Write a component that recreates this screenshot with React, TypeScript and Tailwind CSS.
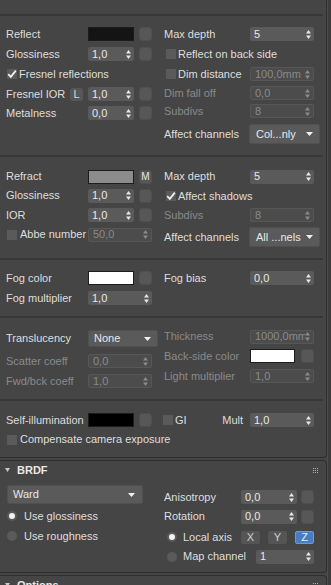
import React from "react";

// small building blocks of the V-Ray material panel

function Arrows({ disabled }: { disabled?: boolean }) {
  const c = disabled ? "#8a8a8a" : "#e8e8e8";
  return (
    <svg width="5" height="9" viewBox="0 0 5 9" className="shrink-0">
      <path d="M2.5 0 L5 3.5 L0 3.5 Z" fill={c} />
      <path d="M0 5.5 L5 5.5 L2.5 9 Z" fill={c} />
    </svg>
  );
}

function Spinner({ value, w, disabled }: { value: string; w: string; disabled?: boolean }) {
  return (
    <div
      className={`${w} h-[14px] shrink-0 rounded-[2px] flex items-center pl-[4px] pr-[3px] ${
        disabled ? "bg-[#4c4c4c] border border-[#575757] text-[#8a8a8a]" : "bg-[#5a5a5a] text-[#e8e8e8]"
      }`}
    >
      <span className="flex-1 overflow-hidden whitespace-nowrap">{value}</span>
      <Arrows disabled={disabled} />
    </div>
  );
}

function Drop({ value, cls }: { value: string; cls: string }) {
  return (
    <div className={`${cls} shrink-0 flex items-center rounded-[2px] bg-[#5a5a5a] border border-[#505050] text-[#e8e8e8]`}>
      <span className="flex-1 whitespace-nowrap">{value}</span>
      <svg width="7" height="4" viewBox="0 0 7 4" className="shrink-0">
        <path d="M0 0 L7 0 L3.5 4 Z" fill="#f0f0f0" />
      </svg>
    </div>
  );
}

function Swatch({ fill, w = "w-[46px]" }: { fill: string; w?: string }) {
  return <div className={`${w} h-[14px] shrink-0 border border-[#1c1c1c] ${fill}`} />;
}

function MapBtn({ label, ml = "ml-[5px]" }: { label?: string; ml?: string }) {
  return (
    <div className={`${ml} w-[13px] h-[14px] shrink-0 rounded-[3px] bg-[#575757] border border-[#4f4f4f] flex items-center justify-center text-[#e8e8e8] text-[10px]`}>
      {label}
    </div>
  );
}

function Check({ on, ml = "ml-[1px]" }: { on?: boolean; ml?: string }) {
  return (
    <div className={`${ml} w-[10px] h-[10px] shrink-0 bg-[#5a5a5a] relative`}>
      {on && (
        <svg width="10" height="10" viewBox="0 0 10 10" className="absolute left-0 top-0">
          <path d="M1.2 5.2 L3.8 7.8 L8.8 1.6" stroke="#f2f2f2" strokeWidth="1.8" fill="none" />
        </svg>
      )}
    </div>
  );
}

function Radio({ on, ml = "" }: { on?: boolean; ml?: string }) {
  return (
    <div className={`${ml} w-[10px] h-[10px] shrink-0 rounded-full bg-[#5a5a5a] flex items-center justify-center`}>
      {on && <div className="w-[6px] h-[6px] rounded-full bg-[#f2f2f2]" />}
    </div>
  );
}

function Grip() {
  return (
    <div className="grid grid-cols-3 gap-[1px] w-[5px]">
      {Array.from({ length: 9 }).map((_, i) => (
        <div key={i} className="w-[1px] h-[1px] bg-[#b0b0b0]" />
      ))}
    </div>
  );
}

function Sep() {
  return <div className="h-[2px] mr-[3px] bg-[#383838]" />;
}

const dim = "text-[#8a8a8a]";

export default function App() {
  return (
    <div className="w-[331px] h-[585px] overflow-hidden bg-[#454545] flex font-['Liberation_Sans',Arial,sans-serif] text-[11px] text-[#dedede] leading-none">
      <div className="w-[327px] shrink-0 flex flex-col">
        {/* main rollout */}
        <div className="border-r border-b border-[#2f2f2f] rounded-br-[4px]">
          <div className="h-[14px]" />
          <Sep />

          {/* reflection */}
          <div className="h-[139px] grid grid-cols-[164px_1fr]">
            <div className="pl-[6px] pt-[8px] flex flex-col">
              <div className="h-5 flex items-center">
                <span className="w-[82px]">Reflect</span>
                <Swatch fill="bg-[#141414]" />
                <MapBtn />
              </div>
              <div className="h-5 flex items-center">
                <span className="w-[82px]">Glossiness</span>
                <Spinner value="1,0" w="w-[46px]" />
                <MapBtn />
              </div>
              <div className="h-5 flex items-center">
                <Check on />
                <span className="ml-[2px]">Fresnel reflections</span>
              </div>
              <div className="h-5 flex items-center">
                <span className="w-[64px]">Fresnel IOR</span>
                <div className="w-[13px] h-[13px] rounded-[3px] bg-[#575757] flex items-center justify-center">L</div>
                <div className="ml-[5px]">
                  <Spinner value="1,0" w="w-[46px]" />
                </div>
                <MapBtn />
              </div>
              <div className="h-[18px] flex items-center">
                <span className="w-[82px]">Metalness</span>
                <Spinner value="0,0" w="w-[46px]" />
                <MapBtn />
              </div>
            </div>
            <div className="pt-[8px] flex flex-col">
              <div className="h-5 flex items-center">
                <span className="w-[86px]">Max depth</span>
                <Spinner value="5" w="w-[64px]" />
              </div>
              <div className="h-5 flex items-center">
                <Check ml="ml-[2px]" />
                <span className="ml-[2px]">Reflect on back side</span>
              </div>
              <div className="h-5 flex items-center">
                <div className="w-[86px] flex items-center">
                  <Check ml="ml-[2px]" />
                  <span className="ml-[2px]">Dim distance</span>
                </div>
                <Spinner value="100,0mm" w="w-[64px]" disabled />
              </div>
              <div className="h-[18px] flex items-center">
                <span className={`w-[86px] ${dim}`}>Dim fall off</span>
                <Spinner value="0,0" w="w-[64px]" disabled />
              </div>
              <div className="h-[18px] flex items-center">
                <span className={`w-[86px] ${dim}`}>Subdivs</span>
                <Spinner value="8" w="w-[64px]" disabled />
              </div>
              <div className="mt-[4px] h-5 flex items-center">
                <span className="w-[85px]">Affect channels</span>
                <Drop value="Col...nly" cls="w-[71px] h-5 pl-[6px] pr-[6px]" />
              </div>
            </div>
          </div>
          <Sep />

          {/* refraction */}
          <div className="h-[101px] grid grid-cols-[164px_1fr]">
            <div className="pl-[6px] pt-[10px] flex flex-col">
              <div className="h-[19px] flex items-center">
                <span className="w-[82px]">Refract</span>
                <Swatch fill="bg-[#8c8c8c]" />
                <MapBtn label="M" />
              </div>
              <div className="h-[19px] flex items-center">
                <span className="w-[82px]">Glossiness</span>
                <Spinner value="1,0" w="w-[46px]" />
                <MapBtn />
              </div>
              <div className="h-5 flex items-center">
                <span className="w-[82px]">IOR</span>
                <Spinner value="1,0" w="w-[46px]" />
                <MapBtn />
              </div>
              <div className="h-[19px] flex items-center">
                <div className="w-[82px] flex items-center">
                  <Check />
                  <span className="ml-[3px]">Abbe number</span>
                </div>
                <Spinner value="50,0" w="w-[64px]" disabled />
              </div>
            </div>
            <div className="pt-[10px] flex flex-col">
              <div className="h-[19px] flex items-center">
                <span className="w-[86px]">Max depth</span>
                <Spinner value="5" w="w-[64px]" />
              </div>
              <div className="h-5 flex items-center">
                <Check on ml="ml-[2px]" />
                <span className="ml-[2px]">Affect shadows</span>
              </div>
              <div className="h-[18px] flex items-center">
                <span className={`w-[86px] ${dim}`}>Subdivs</span>
                <Spinner value="8" w="w-[64px]" disabled />
              </div>
              <div className="mt-[3px] h-5 flex items-center">
                <span className="w-[85px]">Affect channels</span>
                <Drop value="All ...nels" cls="w-[71px] h-5 pl-[6px] pr-[6px]" />
              </div>
            </div>
          </div>
          <Sep />

          {/* fog */}
          <div className="h-[56px] grid grid-cols-[164px_1fr]">
            <div className="pl-[6px] pt-[8px] flex flex-col">
              <div className="h-5 flex items-center">
                <span className="w-[82px]">Fog color</span>
                <Swatch fill="bg-white" />
                <MapBtn />
              </div>
              <div className="h-5 flex items-center">
                <span className="w-[82px]">Fog multiplier</span>
                <Spinner value="1,0" w="w-[64px]" />
              </div>
            </div>
            <div className="pt-[8px]">
              <div className="h-5 flex items-center">
                <span className="w-[86px]">Fog bias</span>
                <Spinner value="0,0" w="w-[64px]" />
              </div>
            </div>
          </div>
          <Sep />

          {/* translucency */}
          <div className="h-[81px] grid grid-cols-[164px_1fr]">
            <div className="pl-[6px] pt-[11px] flex flex-col">
              <div className="h-[19px] flex items-center">
                <span className="w-[82px]">Translucency</span>
                <Drop value="None" cls="w-[70px] h-[17px] pl-[5px] pr-[6px]" />
              </div>
              <div className="mt-[3px] h-5 flex items-center">
                <span className={`w-[82px] ${dim}`}>Scatter coeff</span>
                <Spinner value="0,0" w="w-[64px]" disabled />
              </div>
              <div className="h-5 flex items-center">
                <span className={`w-[82px] ${dim}`}>Fwd/bck coeff</span>
                <Spinner value="1,0" w="w-[64px]" disabled />
              </div>
            </div>
            <div className="pt-[9px] flex flex-col">
              <div className="h-[19px] flex items-center">
                <span className={`w-[86px] ${dim}`}>Thickness</span>
                <Spinner value="1000,0mm" w="w-[64px]" disabled />
              </div>
              <div className="h-5 flex items-center">
                <span className={`w-[86px] ${dim}`}>Back-side color</span>
                <Swatch fill="bg-white" w="w-[45px]" />
                <MapBtn ml="ml-[6px]" />
              </div>
              <div className="h-5 flex items-center">
                <span className={`w-[86px] ${dim}`}>Light multiplier</span>
                <Spinner value="1,0" w="w-[64px]" disabled />
              </div>
            </div>
          </div>
          <Sep />

          {/* self-illumination */}
          <div className="h-[56px] grid grid-cols-[164px_1fr]">
            <div className="pl-[6px] pt-[9px] flex flex-col">
              <div className="h-5 flex items-center">
                <span className="w-[82px]">Self-illumination</span>
                <Swatch fill="bg-black" />
                <MapBtn />
              </div>
              <div className="h-[19px] flex items-center">
                <Check />
                <span className="ml-[3px] whitespace-nowrap">Compensate camera exposure</span>
              </div>
            </div>
            <div className="pt-[9px]">
              <div className="h-5 flex items-center">
                <div className="w-[86px] flex items-center">
                  <Check ml="-ml-[1px]" />
                  <span className="ml-[2px]">GI</span>
                  <span className="ml-auto mr-[7px]">Mult</span>
                </div>
                <Spinner value="1,0" w="w-[64px]" />
              </div>
            </div>
          </div>
        </div>

        {/* BRDF rollout */}
        <div className="mt-[2px] border-t border-r border-b border-[#2f2f2f] rounded-tr-[4px] rounded-br-[4px]">
          <div className="h-[18px] flex items-center pl-[5px] pr-[8px]">
            <svg width="5" height="4" viewBox="0 0 5 4">
              <path d="M0 0 L5 0 L2.5 4 Z" fill="#c8c8c8" />
            </svg>
            <span className="ml-[7px] font-bold text-[#e8e8e8]">BRDF</span>
            <div className="ml-auto">
              <Grip />
            </div>
          </div>
          <div className="h-[93px] grid grid-cols-[164px_1fr]">
            <div className="pl-[7px] pt-[6px] flex flex-col">
              <Drop value="Ward" cls="w-[136px] h-[19px] pl-[5px] pr-[7px]" />
              <div className="mt-[2px] h-5 flex items-center">
                <Radio on />
                <span className="ml-[7px]">Use glossiness</span>
              </div>
              <div className="h-5 flex items-center">
                <Radio />
                <span className="ml-[7px]">Use roughness</span>
              </div>
            </div>
            <div className="pt-[8px] flex flex-col">
              <div className="h-5 flex items-center">
                <span className="w-[77px]">Anisotropy</span>
                <Spinner value="0,0" w="w-[56px]" />
                <MapBtn ml="ml-[4px]" />
              </div>
              <div className="h-[19px] flex items-center">
                <span className="w-[77px]">Rotation</span>
                <Spinner value="0,0" w="w-[56px]" />
                <MapBtn ml="ml-[4px]" />
              </div>
              <div className="mt-[1px] h-5 flex items-center">
                <div className="w-[77px] flex items-center">
                  <Radio on ml="ml-[3px]" />
                  <span className="ml-[6px]">Local axis</span>
                </div>
                <div className="w-[19px] h-[13px] rounded-[2px] bg-[#555555] flex items-center justify-center text-[#d0d0d0]">X</div>
                <div className="ml-[8px] w-[19px] h-[13px] rounded-[2px] bg-[#555555] flex items-center justify-center text-[#d0d0d0]">Y</div>
                <div className="ml-[8px] w-[19px] h-[13px] rounded-[2px] bg-[#4a7cc0] border border-[#6b9ad6] flex items-center justify-center text-[#e4eefa]">Z</div>
              </div>
              <div className="h-[19px] flex items-center">
                <div className="w-[92px] flex items-center">
                  <Radio ml="ml-[3px]" />
                  <span className="ml-[6px]">Map channel</span>
                </div>
                <Spinner value="1" w="w-[58px]" />
              </div>
            </div>
          </div>
        </div>

        {/* next rollout, cut off */}
        <div className="mt-[2px] border-t border-r border-[#2f2f2f] rounded-tr-[4px]">
          <div className="h-[18px] flex items-center pl-[5px] pr-[8px]">
            <svg width="5" height="4" viewBox="0 0 5 4">
              <path d="M0 0 L5 0 L2.5 4 Z" fill="#c8c8c8" />
            </svg>
            <span className="ml-[7px] font-bold text-[#e8e8e8]">Options</span>
            <div className="ml-auto">
              <Grip />
            </div>
          </div>
        </div>
      </div>
      <div className="w-[4px] shrink-0 bg-[#3c3c3c] border-l border-[#4c4c4c]" />
    </div>
  );
}
